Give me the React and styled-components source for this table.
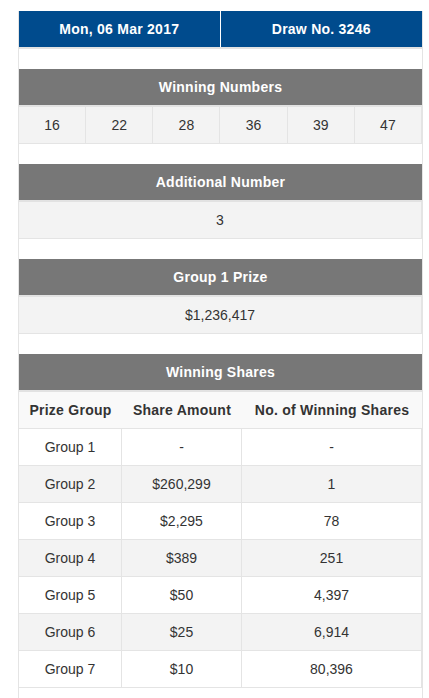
import React from 'react';
import styled, { createGlobalStyle } from 'styled-components';

const GlobalStyle = createGlobalStyle`
  body {
    margin: 0;
    background: #ffffff;
    font-family: "Liberation Sans", Arial, Helvetica, sans-serif;
    font-size: 14px;
    line-height: 20px;
    color: #333333;
  }
`;

const Wrapper = styled.div`
  margin: 11px 0 0 18px;
  width: 403px;
  border-left: 1px solid #e4e4e4;
  border-right: 1px solid #e4e4e4;
  min-height: 687px;
`;

const Block = styled.div`
  margin-bottom: 20px;
`;

const Row = styled.div`
  display: grid;
  grid-template-columns: ${(p) => p.$cols || '1fr'};
  background: ${(p) => p.$bg || '#ffffff'};
  border-bottom: ${(p) => (p.$head ? '2px solid #e2e2e2' : '1px solid #e4e4e4')};
`;

const Cell = styled.div`
  padding: 8px;
  text-align: center;
  font-weight: ${(p) => (p.$bold ? 700 : 400)};
  letter-spacing: ${(p) => (p.$bold ? '0.25px' : 'normal')};
  color: ${(p) => p.$color || '#333333'};
  border-right: ${(p) => p.$line || '1px solid #e4e4e4'};
  white-space: nowrap;

  &:last-child {
    border-right: ${(p) => p.$lastLine || '1px solid #e4e4e4'};
  }
`;

const HeadCell = styled(Cell).attrs({ $bold: true, $color: '#ffffff' })`
  border-right: ${(p) => p.$line || 'none'};
  &:last-child {
    border-right: none;
  }
`;

const SECTION_GREY = '#777777';
const STRIPE = '#f3f3f3';

const numbers = ['16', '22', '28', '36', '39', '47'];

const shares = [
  ['Group 1', '-', '-'],
  ['Group 2', '$260,299', '1'],
  ['Group 3', '$2,295', '78'],
  ['Group 4', '$389', '251'],
  ['Group 5', '$50', '4,397'],
  ['Group 6', '$25', '6,914'],
  ['Group 7', '$10', '80,396'],
];

const shareCols = '103px 120px 1fr';

const SectionTitle = ({ children }) => (
  <Row $head $bg={SECTION_GREY}>
    <HeadCell>{children}</HeadCell>
  </Row>
);

const App = () => (
  <>
    <GlobalStyle />
    <Wrapper>
      <Block>
        <Row $head $bg="#004b8d" $cols="1fr 1fr">
          <HeadCell $line="1px solid #ffffff">Mon, 06 Mar 2017</HeadCell>
          <HeadCell>Draw No. 3246</HeadCell>
        </Row>
      </Block>

      <Block>
        <SectionTitle>Winning Numbers</SectionTitle>
        <Row $bg={STRIPE} $cols="repeat(6, 1fr)">
          {numbers.map((n) => (
            <Cell key={n}>{n}</Cell>
          ))}
        </Row>
      </Block>

      <Block>
        <SectionTitle>Additional Number</SectionTitle>
        <Row $bg={STRIPE}>
          <Cell>3</Cell>
        </Row>
      </Block>

      <Block>
        <SectionTitle>Group 1 Prize</SectionTitle>
        <Row $bg={STRIPE}>
          <Cell>$1,236,417</Cell>
        </Row>
      </Block>

      <Block>
        <SectionTitle>Winning Shares</SectionTitle>
        <Row $bg="#f9f9f9" $cols={shareCols}>
          <Cell $bold $line="none" $lastLine="none">Prize Group</Cell>
          <Cell $bold $line="none" $lastLine="none">Share Amount</Cell>
          <Cell $bold $line="none" $lastLine="none">No. of Winning Shares</Cell>
        </Row>
        {shares.map((s, i) => (
          <Row key={s[0]} $bg={i % 2 ? STRIPE : '#ffffff'} $cols={shareCols}>
            {s.map((v, j) => (
              <Cell key={j}>{v}</Cell>
            ))}
          </Row>
        ))}
      </Block>
    </Wrapper>
  </>
);

export default App;
